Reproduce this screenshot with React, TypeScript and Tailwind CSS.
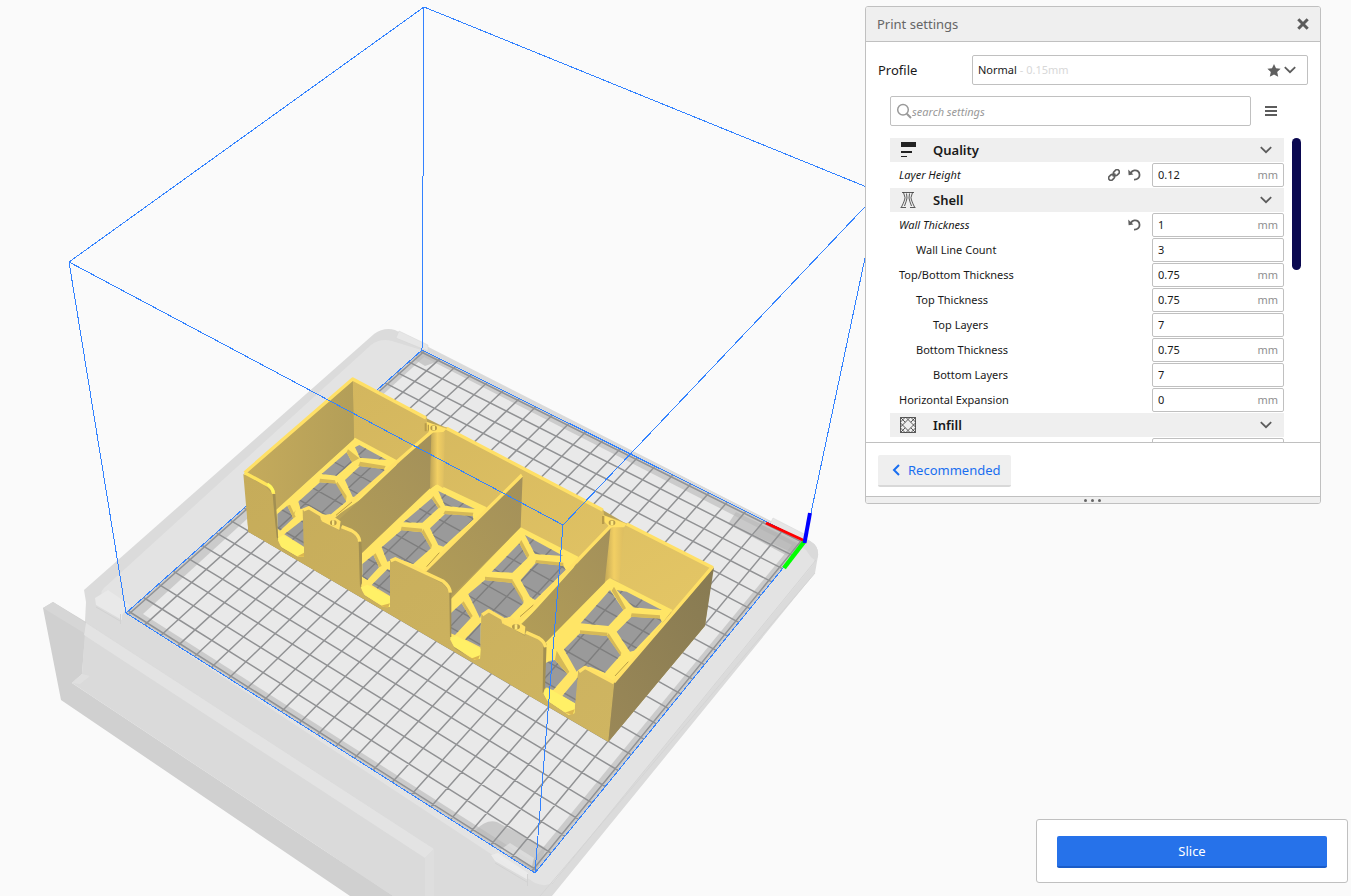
import React, { useState } from "react";

type Pt = [number, number];

const BED = {
  right: [805, 541] as Pt,
  back: [422, 350] as Pt,
  left: [126, 613] as Pt,
  front: [535, 873] as Pt,
};
const BED_SIZE = 223;

/** Maps millimetres on the build plate (origin in the right corner) to scene coordinates. */
function project(mx: number, my: number): Pt {
  const [x0, y0] = BED.right;
  const [x1, y1] = BED.back;
  const [x2, y2] = BED.left;
  const [x3, y3] = BED.front;
  const dx1 = x1 - x2, dx2 = x3 - x2, dx3 = x0 - x1 + x2 - x3;
  const dy1 = y1 - y2, dy2 = y3 - y2, dy3 = y0 - y1 + y2 - y3;
  const den = dx1 * dy2 - dx2 * dy1;
  const g = (dx3 * dy2 - dx2 * dy3) / den;
  const h = (dx1 * dy3 - dx3 * dy1) / den;
  const u = mx / BED_SIZE, v = my / BED_SIZE;
  const w = g * u + h * v + 1;
  return [
    ((x1 - x0 + g * x1) * u + (x3 - x0 + h * x3) * v + x0) / w,
    ((y1 - y0 + g * y1) * u + (y3 - y0 + h * y3) * v + y0) / w,
  ];
}

const at = (mx: number, my: number) => project(mx, my).map((n) => n.toFixed(1)).join(" ");
const stops = Array.from({ length: 23 }, (_, i) => 1.5 + i * 10);
const gridPath = stops
  .map((s) => `M${at(s, 0)}L${at(s, BED_SIZE)}M${at(0, s)}L${at(BED_SIZE, s)}`)
  .join("");

const HOLES_LEFT =
  "M350 277L366 307L320 347L275 342ZM375 262L388 255L470 300L390 293ZM390 318L462 327L465 335L378 412L368 410L345 360ZM270 367L318 370L348 415L348 425L300 465L275 462L240 440L222 445L212 448L205 425ZM172 437L190 475L150 512L142 505L142 462ZM215 482L222 480L222 560L163 523ZM605 415L625 445L577 488L520 487ZM625 393L735 447L645 437ZM645 462L728 467L730 478L640 560L625 555L600 505ZM515 510L575 517L603 565L550 612L495 593L480 602L472 605L455 562ZM430 585L447 622L412 660L397 650L397 612ZM472 628L480 630L480 708L425 675Z";
const HOLES_RIGHT =
  "M268 430L292 475L247 518L185 515ZM285 405L400 468L315 462ZM318 488L400 497L407 510L315 600L300 590L272 540ZM165 540L245 548L280 600L280 610L240 650L220 655L180 630L155 640L150 655L115 582ZM95 610L122 655L75 705L62 700L62 640ZM152 668L152 742L105 718ZM540 570L580 630L535 678L452 670ZM560 570L590 575L695 630L610 622ZM605 650L690 655L695 665L612 752L600 755L560 695ZM450 700L530 707L572 765L525 818L480 800L445 810L440 815L402 748ZM362 782L375 780L412 822L370 870L345 865L345 790ZM445 830L437 912L397 888Z";

function Model() {
  return (
    <g transform="translate(230 360) scale(.33333)">
      <path fill="#b8a259" d="M44 340L368 57L588 174L650 205L1118 450L1190 492L1448 622L1425 797L1135 1145L55 515Z" />
      {/* back walls */}
      <path fill="url(#backWall)" d="M368 55L590 172L592 188L650 202L1120 448L1122 466L1190 490L1448 622L1330 760L1120 660L1040 610L870 505L770 450L620 380L500 310L372 240Z" />
      {/* floor plates */}
      <path fill="#ffe566" d="M375 233L505 303L480 360L300 480L222 450L222 592L205 592L145 555L138 448ZM622 372L770 442L740 500L585 640L480 600L480 742L460 742L395 700L390 585L600 385Z" />
      <g transform="translate(600 120)">
        <path fill="#ffe566" d="M272 382L445 470L420 530L265 680L155 640L152 778L130 780L60 730L60 600ZM540 535L728 630L553 850L445 810L435 942L415 946L342 895L345 720L525 545Z" />
      </g>
      <path fill="#9a9a9a" d={HOLES_LEFT} />
      <path fill="#9a9a9a" transform="translate(600 120)" d={HOLES_RIGHT} />
      <g clipPath="url(#holes)">
        <path transform="scale(3) translate(-230 -360)" d={gridPath} fill="none" stroke="#7e7e7e" strokeWidth="1.4" />
      </g>
      {/* underside of the lattice ribs */}
      <path fill="#d6b958" d="M390 305L467 318L462 328L385 318ZM270 356L315 361L318 371L268 367ZM322 365L350 408L348 424L318 372ZM350 277L354 268L388 295L366 307ZM645 452L730 458L728 468L640 462ZM515 500L577 506L575 517L512 511ZM580 507L606 555L603 567L575 517ZM185 470L197 450L190 475ZM172 437L180 434L197 470L190 475ZM430 585L437 580L455 618L447 622ZM605 415L610 408L632 442L625 445Z" />
      <path transform="translate(600 120)" fill="#d6b958" d="M318 480L400 488L400 498L315 489ZM165 530L248 538L245 549L165 541ZM248 540L278 592L280 608L245 548ZM605 640L690 646L690 656L602 650ZM450 691L533 698L530 708L450 701ZM536 700L574 758L572 768L530 707ZM268 430L274 420L298 466L292 475ZM95 610L101 604L128 648L122 655ZM545 572L552 560L588 625L580 630ZM375 780L380 752L418 815L412 822Z" />
      {/* left wall */}
      <path fill="url(#leftWall)" d="M48 336L368 58L372 237L138 450L130 400L105 374Z" />
      {/* cylinders */}
      <path fill="url(#cyl)" d="M602 215L645 215L640 385L620 372L600 388Z" />
      <path fill="url(#cyl)" d="M1140 490L1182 500L1168 665L1140 652L1122 668Z" />
      {/* dividers */}
      <path fill="url(#divider)" d="M604 216L600 384L395 578L388 545L365 512L322 492L328 478Z" />
      <path fill="url(#divider)" d="M878 345L872 502L662 710L658 690L640 665L580 640Z" />
      <path fill="url(#divider)" d="M1142 500L1124 668L945 850L943 855L925 830L878 805L880 790Z" />
      {/* front walls */}
      <path
        fill="url(#frontWall)"
        d="M40 342L105 378L128 402L132 460L143 540L155 565L205 592L222 588L218 450L235 442L275 465L275 482L330 512L335 497L372 520L388 548L390 680L405 708L465 744L480 740L480 600L495 595L640 672L660 698L660 838L675 866L735 900L750 895L755 760L775 750L820 775L820 790L885 828L887 815L925 835L945 860L940 1000L955 1025L1015 1065L1033 1060L1045 930L1065 918L1153 970L1135 1145L55 515Z"
      />
      <path fill="#a28f52" d="M128 402L136 402L145 540L140 532ZM386 545L394 545L396 575L396 670L390 682ZM658 695L664 695L664 830L660 838ZM940 860L950 850L945 985L938 1000Z" />
      {/* front right outer wall */}
      <path fill="url(#rightWall)" d="M1452 622L1425 797L1135 1145L1153 968Z" />
      {/* scoops */}
      <g fill="#fff066">
        <path d="M143 535L160 525L222 562L222 590L205 590L155 562Z" />
        <path d="M392 682L412 674L480 710L480 740L464 741L405 705Z" />
        <path d="M660 832L680 828L752 866L750 896L733 896L672 860Z" />
        <path d="M940 1000L950 982L1035 1030L1033 1060L1014 1062L952 1022Z" />
      </g>
      <path fill="#dcb750" d="M200 590L222 578L222 590ZM450 738L480 730L474 744ZM722 896L750 886L744 900ZM1004 1058L1034 1048L1028 1064Z" />
      {/* top rims */}
      <g fill="none" stroke="#ffe066" strokeWidth="10" strokeLinejoin="round">
        <path d="M44 338L368 57L588 174M650 205L1118 450M1190 492L1446 622L1152 966" />
        <path d="M606 214L300 480M876 345L585 632M1146 494L865 785" />
        <path d="M44 338L105 371Q130 382 131 402" stroke="#ffe45c" />
        <path d="M220 450L236 443L275 466L278 480M335 500L365 512Q388 525 389 545" />
        <path d="M482 602L496 596L640 664Q660 680 661 698" />
        <path d="M757 765L776 752L818 776L822 790M888 817L925 833Q945 846 947 862" />
        <path d="M1047 935L1065 922L1152 968" />
      </g>
      <path fill="#ffe066" d="M590 185L650 206L640 216L600 218L590 208ZM1120 466L1190 492L1182 502L1140 502L1122 484ZM275 468L300 462L332 484L328 510L275 484ZM820 778L845 772L886 800L884 824L820 792Z" />
      <g fill="#b79b4b">
        <path d="M584 190h6v24h-6ZM593 194h4v18h-4ZM1116 468h7v24h-7Z" />
        <ellipse cx="611" cy="204" rx="10" ry="8" />
        <ellipse cx="1146" cy="488" rx="10" ry="8" />
        <ellipse cx="310" cy="488" rx="10" ry="8" />
        <ellipse cx="858" cy="800" rx="12" ry="8" />
      </g>
      <g fill="#ffe87a">
        <path d="M607 197h8v14h-8ZM1142 482h8v13h-8ZM306 481h7v14h-7ZM854 793h8v14h-8Z" />
      </g>
      <path d="M318 466L366 426M590 620L628 578M870 770L910 735M1155 948L1195 905" stroke="#b89c45" strokeWidth="3" fill="none" />
      <path d="M112 372Q128 382 130 398" stroke="#fff75c" strokeWidth="9" fill="none" />
    </g>
  );
}

function Scene() {
  return (
    <svg className="absolute inset-0 h-full w-full" viewBox="0 0 1351 896" preserveAspectRatio="xMinYMin slice" role="img" aria-label="Build plate preview">
      <defs>
        <linearGradient id="backWall" x1="0" y1="0" x2="1" y2="1">
          <stop offset="0" stopColor="#d3b65e" />
          <stop offset="1" stopColor="#e4c665" />
        </linearGradient>
        <linearGradient id="leftWall" x1="0" y1="0" x2="1" y2="0">
          <stop offset="0" stopColor="#c5ab5c" />
          <stop offset="1" stopColor="#b39e58" />
        </linearGradient>
        <linearGradient id="divider" x1="0" y1="1" x2="1" y2="0">
          <stop offset="0" stopColor="#b29d57" />
          <stop offset="1" stopColor="#a3905a" />
        </linearGradient>
        <linearGradient id="frontWall" x1="0" y1="0" x2="1" y2="1">
          <stop offset="0" stopColor="#c6ac5a" />
          <stop offset="1" stopColor="#cfb561" />
        </linearGradient>
        <linearGradient id="rightWall" x1="0" y1="1" x2="1" y2="0">
          <stop offset="0" stopColor="#9a8857" />
          <stop offset="1" stopColor="#877a52" />
        </linearGradient>
        <linearGradient id="cyl">
          <stop offset="0" stopColor="#c0a556" />
          <stop offset=".5" stopColor="#f2cf63" />
          <stop offset="1" stopColor="#dcbd61" />
        </linearGradient>
        <clipPath id="holes">
          <path d={HOLES_LEFT} />
          <path transform="translate(600 120)" d={HOLES_RIGHT} />
        </clipPath>
        <clipPath id="bed">
          <path d="M422 350L805 541L535 873L126 613Z" />
        </clipPath>
      </defs>

      {/* printer body */}
      <path fill="#dbdbdb" d="M374 334Q384 327 395 330L810 541Q819 546 818 556L815 573L552 896H390L82 680L86 602L84 590Z" />
      <path fill="#e3e3e3" d="M371 345Q380 338 392 341L428 352L810 552Q818 556 812 566L560 874Q552 890 535 883L106 600Q98 594 104 588Z" />
      <path fill="#dadada" d="M810 541Q819 546 818 556Q815 566 805 548L424 349L398 333Z" />
      <path fill="none" stroke="#d5d5d5" d="M816 560L552 884M815 573L540 896" />
      {/* front door */}
      <path fill="#d0d0d0" d="M43 608L53 602L86 622L82 674L72 683L393 896H350L61 700Z" />
      <path fill="#dadada" d="M86 622L434 849V896H393L72 683L82 674Z" />
      <path fill="#d6d6d6" d="M43 608L53 602L86 623L84 633Z" />
      <path fill="#e3e3e3" d="M86 623L434 849L425 858L84 635Z" />
      <path fill="#dedede" d="M425 858L434 849V896H425Z" />
      <path fill="#dfdfdf" d="M82 674L90 676L80 684L72 683Z" />
      <path fill="#e9e9e9" d="M95 598L108 590L130 605L122 615V620L96 605Z" />
      <path fill="none" stroke="#d2d2d2" d="M96 607L120 621M120.500 614V624" />
      {/* bed clips */}
      <path fill="#e6e6e6" stroke="#d5d5d5" strokeWidth=".5" d="M399 331L428 345V351L396 338ZM773 518L808 536L803 541L770 524Z" />

      {/* bed surface */}
      <path fill="#cbcbcb" d="M422 350L805 541L535 873L126 613Z" />
      <path fill="#e9e9e9" d="M424 357L792 545L532 861L143 614Z" />
      <g clipPath="url(#bed)">
        <path fill="#b8b8b8" fillOpacity=".65" d="M412 358L422 350L442 360L425 366ZM736 512L805 545L795 560L728 524ZM476 830Q486 819 497 822L546 848L535 875Z" />
        <path fill="#a5a5a5" fillOpacity=".35" d="M760 524L800 545L793 553L754 535Z" />
        <path fill="#e2e2e2" fillOpacity=".7" d="M500 850L510 843L534 858L532 866Z" />
      </g>
      <path d={gridPath} fill="none" stroke="#919294" strokeWidth="1.500" />
      <path fill="#ececec" fillOpacity=".85" d="M491 855L498 853L528 873V880L495 861Z" />
      <path fill="none" stroke="#d2d2d2" d="M495 863L527 882M527.500 874V886" />

      {/* build volume behind the model */}
      <g fill="none" stroke="#3282ff" shapeRendering="crispEdges">
        <path d="M422 350L805 541L535 873L126 613Z" />
        <path d="M424 7L422 350M424 7L69 262L126 613M424 7L879 192L805 541" />
      </g>
      <Model />
      <path d="M69 262L563 525L879 192M563 525L535 873" fill="none" stroke="#3282ff" shapeRendering="crispEdges" />

      {/* axes */}
      <path d="M766 523L805 541" stroke="#f00" strokeWidth="3" />
      <path d="M804 542L784 568" stroke="#0f0" strokeWidth="4.500" />
      <path d="M804.500 543L810 513" stroke="#00f" strokeWidth="4" />
    </svg>
  );
}

function Chevron() {
  return (
    <svg width="12" height="8" viewBox="0 0 12 8" fill="none" stroke="#5c5c5c" strokeWidth="1.800" aria-hidden="true">
      <path d="M.8 1.200L6 6.200L11.200 1.200" />
    </svg>
  );
}

function LinkIcon() {
  return (
    <svg width="12" height="12" viewBox="0 0 12 12" fill="none" stroke="#5f5f5f" strokeWidth="1.600" aria-hidden="true">
      <rect x="5.200" y="1.300" width="6.400" height="4.600" rx="2.300" transform="rotate(-45 8.400 3.600)" />
      <rect x=".4" y="6.100" width="6.400" height="4.600" rx="2.300" transform="rotate(-45 3.600 8.400)" />
      <path d="M4.600 7.400L7.400 4.600" />
    </svg>
  );
}

function ResetIcon() {
  return (
    <svg width="13" height="12" viewBox="0 0 13 12" aria-hidden="true">
      <path d="M2.600 4.200C4.500 1 8 .6 10 2.300S12 7.600 10.300 9.200S7.600 10.800 6 10.700" fill="none" stroke="#5f5f5f" strokeWidth="1.800" />
      <path d="M.2 .6L5.400 5.600L.6 6.200Z" fill="#5f5f5f" />
    </svg>
  );
}

const categoryIcons: Record<string, React.ReactNode> = {
  Quality: (
    <path fill="#222" stroke="none" d="M1 0H16V5H1ZM1 9H12V11H1ZM1 14H7V15H1Z" />
  ),
  Shell: (
    <path d="M2 .5H14M3.500 .5L5 5.500Q5 8 1.500 15M6.500 1.500L7 6Q6.500 9 4.500 14M12.500 .5L11 5.500Q11 8 14.500 15M9.500 1.500L9 6Q9.500 9 11.500 14M.5 15.500H6M10 15.500H15.500" />
  ),
  Infill: (
    <path d="M.5 .5H15.500V15.500H.5ZM8 2.500L13.500 8L8 13.500L2.500 8ZM.5 5L5 .5M11 .5L15.500 5M.5 11L5 15.500M15.500 11L11 15.500M6 .5L8 2.500L10 .5M15.500 6L13.500 8L15.500 10M6 15.500L8 13.500L10 15.500M.5 6L2.500 8L.5 10M.5 .5L5.200 5.200M15.500 .5L10.800 5.200M.5 15.500L5.200 10.800M15.500 15.500L10.800 10.800" />
  ),
};

function Category({ name }: { name: string }) {
  return (
    <button type="button" aria-expanded="true" className="flex h-6 w-full shrink-0 items-center bg-[#efefef] pr-3 pl-2.5 text-left">
      <svg width="16" height="16" viewBox="0 0 16 16" fill="none" stroke="#333" strokeWidth=".8" aria-hidden="true">
        {categoryIcons[name]}
      </svg>
      <span className="ml-[17px] flex-1 text-[13px] leading-6 font-semibold text-[#191919]">{name}</span>
      <Chevron />
    </button>
  );
}

const fieldBox = "flex h-6 w-[132px] items-center rounded-xs border border-[#c0c0c0] bg-white px-[5px]";

type SettingProps = { name: string; value: string; unit?: string; level?: 0 | 1 | 2; changed?: boolean; linked?: boolean };
const indents = ["pl-[9px]", "pl-[26px]", "pl-[43px]"];

function Setting({ name, value, unit, level = 0, changed, linked }: SettingProps) {
  const [current, setCurrent] = useState(value);
  const id = name.toLowerCase().replace(/[^a-z]+/g, "-");
  return (
    <div className={`flex h-6 shrink-0 items-center ${indents[level]}`}>
      <label htmlFor={id} className={`flex-1 text-[11px] text-[#191919] ${changed ? "italic" : ""}`}>{name}</label>
      <div className="mr-[11px] flex items-center gap-2">
        {linked && <button type="button" aria-label={`${name} is linked`}><LinkIcon /></button>}
        {changed && <button type="button" aria-label={`Reset ${name}`}><ResetIcon /></button>}
      </div>
      <div className={fieldBox}>
        <input id={id} value={current} onChange={(e) => setCurrent(e.target.value)} className="w-0 min-w-0 flex-1 bg-transparent text-[11px] text-[#191919] outline-none" />
        {unit && <span className="text-[11px] text-[#8f8f8f]">{unit}</span>}
      </div>
    </div>
  );
}

function PrintSettings() {
  return (
    <section aria-labelledby="print-settings" className="absolute top-1.5 right-[30px] flex w-[456px] flex-col overflow-hidden rounded-[3px] border border-[#c0c0c0] bg-white">
      <header className="flex h-[35px] items-center justify-between border-b border-[#c0c0c0] bg-[#efefef] px-[11px]">
        <h1 id="print-settings" className="pt-0.5 text-[13px] text-[#666]">Print settings</h1>
        <button type="button" aria-label="Close">
          <svg width="12" height="12" viewBox="0 0 12 12" stroke="#5c5c5c" strokeWidth="3" aria-hidden="true">
            <path d="M1.300 1.300L10.700 10.700M10.700 1.300L1.300 10.700" />
          </svg>
        </button>
      </header>

      <div className="flex items-center px-3 pt-[13px]">
        <label htmlFor="profile" className="w-[94px] pt-0.5 text-[13px] text-[#191919]">Profile</label>
        <div className="grid h-[30px] flex-1 items-center rounded-xs border border-[#c0c0c0]">
          <select id="profile" className="col-start-1 row-start-1 h-full w-full appearance-none bg-transparent px-[5px] text-[11px] text-transparent outline-none">
            <option>Normal - 0.15mm</option>
          </select>
          <div aria-hidden="true" className="pointer-events-none col-start-1 row-start-1 flex items-center pr-[11px] pl-[5px] text-[11px]">
            <span className="text-[#191919]">Normal</span>
            <span className="ml-[3px] flex-1 text-[#d8d8d8]">- 0.15mm</span>
            <svg width="14" height="13" viewBox="0 0 14 13" fill="#5f5f5f" className="mr-[3px]">
              <path d="M7 0L9 4.300L13.600 4.800L10.200 8L11.200 12.800L7 10.400L2.800 12.800L3.800 8L.4 4.800L5 4.300Z" />
            </svg>
            <Chevron />
          </div>
        </div>
      </div>

      <div className="flex items-center pt-[11px] pl-6">
        <div className="flex h-[30px] w-[361px] items-center rounded-xs border border-[#c0c0c0] px-[5px]">
          <svg width="16" height="16" viewBox="0 0 16 16" fill="none" stroke="#9a9a9a" strokeWidth="1.500" aria-hidden="true">
            <circle cx="7" cy="6.800" r="5.300" />
            <path d="M10.800 10.800L15 15" strokeWidth="2" />
          </svg>
          <input type="search" aria-label="Search settings" placeholder="search settings" className="min-w-0 flex-1 bg-transparent pt-0.5 text-[11px] italic outline-none placeholder:text-[#999]" />
        </div>
        <button type="button" aria-label="Setting visibility" className="ml-3.5">
          <svg width="12" height="10" viewBox="0 0 12 10" fill="#5c5c5c" aria-hidden="true">
            <path d="M0 0H12V2H0ZM0 4H12V6H0ZM0 8H12V10H0Z" />
          </svg>
        </button>
      </div>

      <div className="mt-3 flex h-[304px] gap-2 pr-[19px] pl-6">
        <div className="flex flex-1 flex-col gap-px overflow-y-auto [scrollbar-width:none]">
          <Category name="Quality" />
          <Setting name="Layer Height" value="0.12" unit="mm" changed linked />
          <Category name="Shell" />
          <Setting name="Wall Thickness" value="1" unit="mm" changed />
          <Setting name="Wall Line Count" value="3" level={1} />
          <Setting name="Top/Bottom Thickness" value="0.75" unit="mm" />
          <Setting name="Top Thickness" value="0.75" unit="mm" level={1} />
          <Setting name="Top Layers" value="7" level={2} />
          <Setting name="Bottom Thickness" value="0.75" unit="mm" level={1} />
          <Setting name="Bottom Layers" value="7" level={2} />
          <Setting name="Horizontal Expansion" value="0" unit="mm" />
          <Category name="Infill" />
          <div className="flex shrink-0 justify-end">
            <div className={fieldBox}>
              <input aria-label="Infill setting" className="w-0 min-w-0 flex-1 bg-transparent text-[11px] outline-none" />
            </div>
          </div>
        </div>
        <div className="h-[132px] w-[9px] rounded-full bg-[#0a0850]" />
      </div>

      <footer className="border-t border-[#c0c0c0] px-3 pt-3 pb-[9px]">
        <button type="button" className="flex h-8 items-center gap-2 rounded-xs border-b-2 border-[#d8d8d8] bg-[#efefef] pr-2.5 pl-3.5 text-[13px] text-[#196ef0]">
          <svg width="8" height="12" viewBox="0 0 8 12" fill="none" stroke="#196ef0" strokeWidth="2" aria-hidden="true">
            <path d="M7 1L2 6L7 11" />
          </svg>
          <span className="pt-0.5">Recommended</span>
        </button>
      </footer>
      <div className="flex h-[7px] items-center justify-center gap-1 border-t border-[#c0c0c0] bg-[#efefef] pr-0.5">
        <span className="size-[3px] rounded-full bg-[#666]" />
        <span className="size-[3px] rounded-full bg-[#666]" />
        <span className="size-[3px] rounded-full bg-[#666]" />
      </div>
    </section>
  );
}

export default function App() {
  return (
    <main className="relative min-h-screen overflow-hidden bg-[#fafafa] font-['Noto_Sans',sans-serif]">
      <Scene />
      <PrintSettings />
      <div className="absolute right-[3px] bottom-[13px] w-[312px] rounded-[3px] border border-[#c0c0c0] bg-white px-5 pt-4 pb-3.5">
        <button type="button" className="h-8 w-full rounded-xs border-b-2 border-[#1a5cc8] bg-[#2672ea] pt-0.5 text-[13px] text-white">Slice</button>
      </div>
    </main>
  );
}
